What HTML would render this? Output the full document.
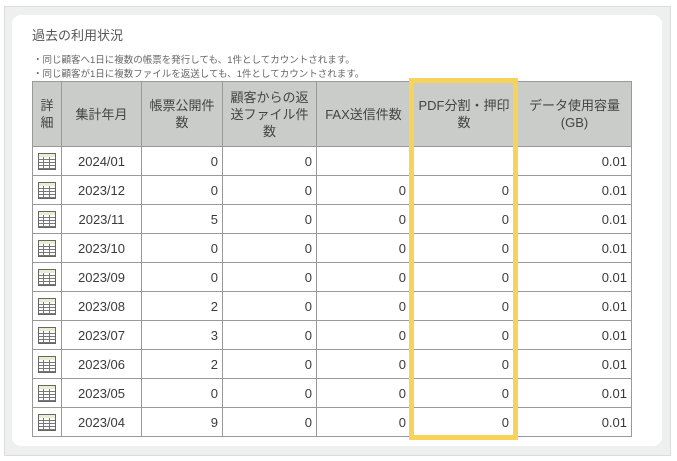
<!DOCTYPE html>
<html><head><meta charset="utf-8"><style>
body{margin:0;width:677px;height:461px;background:#fff;font-family:"Liberation Sans","Noto Sans CJK JP",sans-serif;color:#333;position:relative;overflow:hidden}
.outer{position:absolute;left:4px;top:6px;width:665px;height:448px;background:#eef0ef;border:1px solid #dcdcdc}
.card{position:absolute;left:12px;top:15px;width:650px;height:431px;background:#fff;border-radius:9px}
.title{position:absolute;left:32px;top:25px;font-size:13px;color:#555}
.note{position:absolute;left:33px;font-size:9.5px;color:#666;white-space:nowrap}
table{position:absolute;left:32px;top:81px;border-collapse:collapse;table-layout:fixed}
th,td{border:1px solid #999;font-size:13px;padding:0 4px;height:28px;color:#3a3a3a}
th{background:#c9ccc9;font-weight:normal;height:64px;line-height:17px;color:#444;padding:0 3px}
td{text-align:right}
td.c{text-align:center}
td.p{padding-right:8px}
.ic{display:inline-block;width:18px;height:17px;border:1px solid #666;box-sizing:border-box;vertical-align:middle;
background:linear-gradient(#e6efd0 0 3px,transparent 3px),repeating-linear-gradient(#fff 0 2px,#777 2px 3px),#fff;position:relative}
.ic:after{content:"";position:absolute;left:4px;top:3px;width:5px;height:12px;border-left:1px solid #777;border-right:1px solid #777}
.y{position:absolute;left:409px;top:78px;width:99px;height:352px;border:5px solid #f8d35a}
</style></head><body>
<div class="outer"></div>
<div class="card"></div>
<div class="title">過去の利用状況</div>
<div class="note" style="top:52px">・同じ顧客へ1日に複数の帳票を発行しても、1件としてカウントされます。</div>
<div class="note" style="top:66px">・同じ顧客が1日に複数ファイルを返送しても、1件としてカウントされます。</div>
<table>
<colgroup><col style="width:29px"><col style="width:80px"><col style="width:81px"><col style="width:94px"><col style="width:94px"><col style="width:107px"><col style="width:114px"></colgroup>
<tr><th>詳<br>細</th><th>集計年月</th><th>帳票公開件<br>数</th><th>顧客からの返<br>送ファイル件<br>数</th><th>FAX送信件数</th><th>PDF分割・押印<br>数</th><th>データ使用容量<br>(GB)</th></tr>
<tr><td class="c"><span class="ic"></span></td><td class="c">2024/01</td><td>0</td><td>0</td><td></td><td class="p"></td><td>0.01</td></tr>
<tr><td class="c"><span class="ic"></span></td><td class="c">2023/12</td><td>0</td><td>0</td><td>0</td><td class="p">0</td><td>0.01</td></tr>
<tr><td class="c"><span class="ic"></span></td><td class="c">2023/11</td><td>5</td><td>0</td><td>0</td><td class="p">0</td><td>0.01</td></tr>
<tr><td class="c"><span class="ic"></span></td><td class="c">2023/10</td><td>0</td><td>0</td><td>0</td><td class="p">0</td><td>0.01</td></tr>
<tr><td class="c"><span class="ic"></span></td><td class="c">2023/09</td><td>0</td><td>0</td><td>0</td><td class="p">0</td><td>0.01</td></tr>
<tr><td class="c"><span class="ic"></span></td><td class="c">2023/08</td><td>2</td><td>0</td><td>0</td><td class="p">0</td><td>0.01</td></tr>
<tr><td class="c"><span class="ic"></span></td><td class="c">2023/07</td><td>3</td><td>0</td><td>0</td><td class="p">0</td><td>0.01</td></tr>
<tr><td class="c"><span class="ic"></span></td><td class="c">2023/06</td><td>2</td><td>0</td><td>0</td><td class="p">0</td><td>0.01</td></tr>
<tr><td class="c"><span class="ic"></span></td><td class="c">2023/05</td><td>0</td><td>0</td><td>0</td><td class="p">0</td><td>0.01</td></tr>
<tr><td class="c"><span class="ic"></span></td><td class="c">2023/04</td><td>9</td><td>0</td><td>0</td><td class="p">0</td><td>0.01</td></tr>
</table>
<div class="y"></div>
</body></html>
